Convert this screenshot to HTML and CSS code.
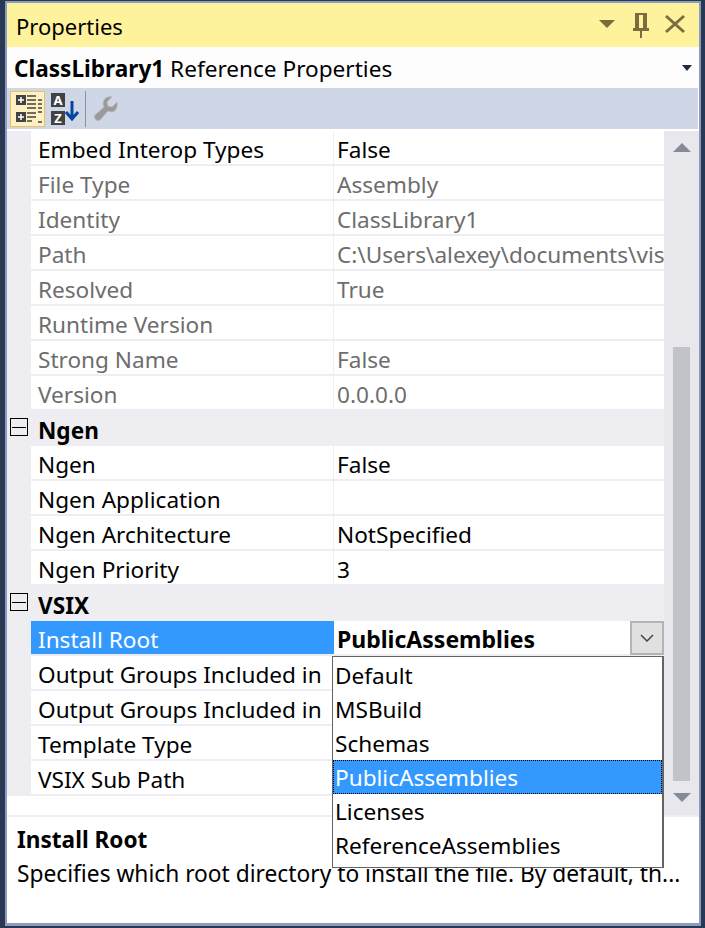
FILE: index.html
```html
<!DOCTYPE html>
<html>
<head>
<meta charset="utf-8">
<title>Properties</title>
<link rel="stylesheet" href="styles.css">
</head>
<body>
<div class="ventana">
  <div class="titulo">
    <span class="titulo-texto">Properties</span>
    <svg class="tit-iconos" width="100" height="26" viewBox="0 0 100 26">
      <path d="M0 8h16l-8 8z" fill="#7d6b3e"/>
      <path d="M38 1h10v15h2v3h-7v7h-2v-7h-7v-3h2V1zM40 3v13h4V3z" fill="#7d6b3e" fill-rule="evenodd"/>
      <path d="M67 4l18 16M85 4L67 20" stroke="#7d6b3e" stroke-width="3" fill="none"/>
    </svg>
  </div>
  <div class="selector">
    <span><b>ClassLibrary1</b> Reference Properties</span>
    <svg class="sel-flecha" width="10" height="6" viewBox="0 0 10 6"><path d="M0 0h10L5 6z" fill="#1e2a44"/></svg>
  </div>
  <div class="barra">
    <div class="boton activo">
      <svg width="32" height="34" viewBox="0 0 32 34">
        <rect x="4" y="3" width="10" height="10" fill="#424242"/>
        <path d="M6 8h6M9 5v6" stroke="#fff" stroke-width="1.500"/>
        <rect x="4" y="20" width="10" height="10" fill="#424242"/>
        <path d="M6 25h6M9 22v6" stroke="#fff" stroke-width="1.500"/>
        <path d="M15 4h9M15 8h9M15 12h9M15 21h9M15 25h9M15 29h5M26 8h4M26 12h4M26 16h4M26 20h4M26 30h4M15 16h9" stroke="#424242" stroke-width="1.500"/>
      </svg>
    </div>
    <div class="boton">
      <svg width="34" height="34" viewBox="0 0 34 34">
        <rect x="1" y="1" width="14" height="14" fill="#424242"/>
        <text x="8" y="13" class="letra">A</text>
        <rect x="1" y="19" width="14" height="14" fill="#424242"/>
        <text x="8" y="31" class="letra">Z</text>
        <path d="M22 9v17M16 20l6 7 6-7" stroke="#00479d" stroke-width="3" fill="none"/>
      </svg>
    </div>
    <div class="separador"></div>
    <div class="boton">
      <svg width="26" height="26" viewBox="0 0 26 26">
        <path d="M24 6l-5 5-4-1-1-4 5-5c-4-1-9 1-9 7l1 3L2 19c-2 3 2 7 5 5l8-9 3 1c5 0 7-5 6-10z" fill="#9a9a9a" stroke="#bcbcbc"/>
      </svg>
    </div>
  </div>

  <div class="grid-zona">
    <div class="tabla">
      <div class="fila"><span class="nom">Embed Interop Types</span><span class="val">False</span></div>
      <div class="fila gris"><span class="nom">File Type</span><span class="val">Assembly</span></div>
      <div class="fila gris"><span class="nom">Identity</span><span class="val">ClassLibrary1</span></div>
      <div class="fila gris"><span class="nom">Path</span><span class="val">C:\Users\alexey\documents\vis</span></div>
      <div class="fila gris"><span class="nom">Resolved</span><span class="val">True</span></div>
      <div class="fila gris"><span class="nom">Runtime Version</span><span class="val"></span></div>
      <div class="fila gris"><span class="nom">Strong Name</span><span class="val">False</span></div>
      <div class="fila gris"><span class="nom">Version</span><span class="val">0.0.0.0</span></div>
      <div class="grupo"><span class="caja"></span><b>Ngen</b></div>
      <div class="fila"><span class="nom">Ngen</span><span class="val">False</span></div>
      <div class="fila"><span class="nom">Ngen Application</span><span class="val"></span></div>
      <div class="fila"><span class="nom">Ngen Architecture</span><span class="val">NotSpecified</span></div>
      <div class="fila"><span class="nom">Ngen Priority</span><span class="val">3</span></div>
      <div class="grupo"><span class="caja"></span><b>VSIX</b></div>
      <div class="fila elegida"><span class="nom">Install Root</span><span class="val"><b>PublicAssemblies</b></span>
        <span class="desplegar"><svg width="14" height="8" viewBox="0 0 14 8"><path d="M1 1l6 6 6-6" stroke="#444" stroke-width="1.500" fill="none"/></svg></span>
      </div>
      <div class="fila"><span class="nom">Output Groups Included in</span><span class="val"></span></div>
      <div class="fila"><span class="nom">Output Groups Included in</span><span class="val"></span></div>
      <div class="fila"><span class="nom">Template Type</span><span class="val"></span></div>
      <div class="fila"><span class="nom">VSIX Sub Path</span><span class="val"></span></div>
    </div>
    <div class="scroll">
      <svg width="18" height="10" viewBox="0 0 18 10"><path d="M0 9L9 0l9 9z" fill="#868999"/></svg>
      <div class="pista"><div class="pulgar"></div></div>
      <svg width="18" height="10" viewBox="0 0 18 10"><path d="M0 0h18L9 9z" fill="#868999"/></svg>
    </div>
    <ul class="lista">
      <li>Default</li>
      <li>MSBuild</li>
      <li>Schemas</li>
      <li class="marcado">PublicAssemblies</li>
      <li>Licenses</li>
      <li>ReferenceAssemblies</li>
    </ul>
  </div>

  <div class="descripcion">
    <b>Install Root</b>
    <p>Specifies which root directory to install the file. By default, th...</p>
  </div>
</div>
</body>
</html>
```

FILE: styles.css
```css
* { box-sizing: border-box; }
html, body { margin: 0; height: 100%; }
body {
  background: #293955;
  padding: 1px 4px 2px 5px;
  font-family: "Noto Sans", sans-serif;
  font-size: 22.6px;
  color: #000;
  height: 928px;
  overflow: hidden;
}
.ventana {
  height: 925px;
  border: solid #8e9bbc;
  border-width: 2px 2px 3px 2px;
  background: #fff;
  display: flex;
  flex-direction: column;
  position: relative;
}
.titulo {
  height: 44px;
  background: #fff29d;
  display: flex;
  align-items: center;
  justify-content: space-between;
  padding: 0 0 0 9px;
  flex: none;
}
.titulo-texto { font-size: 22px; padding-top: 2px; }
.selector {
  height: 41px;
  background: #fdfdfd;
  display: flex;
  align-items: center;
  justify-content: space-between;
  padding: 2px 7px 0 7px;
  flex: none;
}
.sel-flecha { flex: none; margin-top: -2px; }
.barra {
  height: 41px;
  background: #cfd6e5;
  display: flex;
  align-items: center;
  padding-left: 3px;
  margin-right: 1px;
  flex: none;
}
.boton { height: 36px; display: flex; align-items: center; justify-content: center; }
.boton.activo {
  width: 35px;
  background: #fef0c0;
  border: 1px solid #e5c365;
}
.boton:nth-child(2) { width: 37px; margin-left: 3px; }
.boton:last-child { width: 40px; }
.separador { width: 1px; height: 36px; background: #8a93a6; }
.letra { font: bold 13px "Noto Sans", sans-serif; fill: #fff; text-anchor: middle; }

.grid-zona {
  display: flex;
  height: 684px;
  margin-top: 2px;
  flex: none;
  position: relative;
}
.tabla { width: 657px; background: #eeeef2; flex: none; height: 665px; }
.fila, .grupo { height: 35px; display: flex; align-items: center; white-space: nowrap; }
.fila {
  margin-left: 24px;
  background: #fff;
  border-bottom: 2px solid #eeeef2;
  position: relative;
}
.nom {
  width: 303px;
  padding-left: 7px;
  overflow: hidden;
  flex: none;
  height: 33px;
  line-height: 37px;
  border-right: 1px solid #eeeef2;
}
.val { padding-left: 3px; overflow: hidden; flex: 1; line-height: 37px; height: 33px; }
.val b { font-size: 23px; }
.gris .nom, .gris .val { color: #6d6d6d; }
.elegida .nom { background: #3399ff; color: #fff; border-right: none; }
.desplegar {
  position: absolute;
  right: 0;
  top: 0;
  width: 34px;
  height: 34px;
  background: #e1e1e1;
  border: 2px solid #b4b4b4;
  display: flex;
  align-items: center;
  justify-content: center;
}
.grupo { padding: 3px 0 0 31px; position: relative; }
.caja {
  position: absolute;
  left: 3px;
  top: 7px;
  width: 18px;
  height: 18px;
  border: 1px solid #000;
  background: linear-gradient(#000, #000) center / 14px 1px no-repeat;
}
.scroll {
  width: 35px;
  height: 684px;
  background: #e8e8ec;
  display: flex;
  flex-direction: column;
  align-items: center;
  padding: 12px 0;
  flex: none;
}
.pista { flex: 1; width: 17px; padding-top: 194px; }
.pulgar { height: 434px; background: #c2c3c9; }
.lista {
  list-style: none;
  margin: 0;
  padding: 1px 0;
  position: absolute;
  left: 325px;
  top: 525px;
  width: 332px;
  height: 212px;
  background: #fff;
  border: 1px solid #646464;
  border-width: 1px 2px 1px 1px;
  z-index: 2;
}
.lista li { height: 34px; line-height: 36px; padding-left: 2px; }
.lista li.marcado { background: #3399ff; color: #fff; outline: 1px dotted #000; outline-offset: -1px; }
.descripcion {
  flex: 1;
  border-top: 2px solid #eeeef2;
  padding: 6px 10px;
  line-height: 34px;
}
.descripcion p { margin: 0; font-size: 22.75px; }
```
